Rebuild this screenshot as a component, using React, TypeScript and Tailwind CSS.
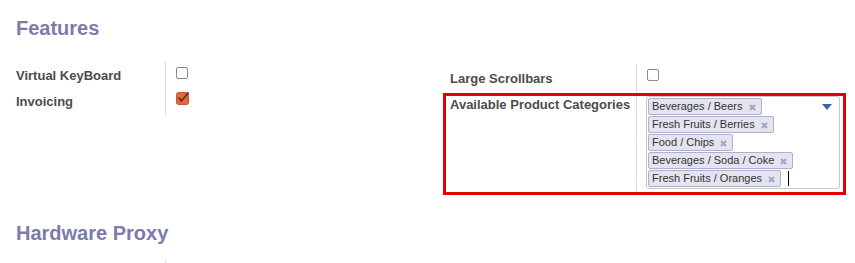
import React from 'react';

const CATEGORIES = [
  'Beverages / Beers',
  'Fresh Fruits / Berries',
  'Food / Chips',
  'Beverages / Soda / Coke',
  'Fresh Fruits / Oranges',
];

const Checkbox: React.FC<{ checked?: boolean }> = ({ checked }) =>
  checked ? (
    <svg width="14" height="14" viewBox="0 0 14 14" className="block -mt-[1px]">
      <rect x="0.5" y="1.5" width="12" height="12" rx="2" fill="#e0683f" stroke="#c9552f" />
      <path d="M2.5 6.5l3 3.5 7-8.5" fill="none" stroke="#5a2a1a" strokeWidth="1.6" />
    </svg>
  ) : (
    <div className="w-[12px] h-[12px] rounded-[2px] border border-[#8a8a8a] bg-white" />
  );

const Tag: React.FC<{ label: string }> = ({ label }) => (
  <div className="self-start flex items-center h-[17px] pl-[3px] pr-[5px] bg-[#e3e4ef] border border-[#aeb0cc] rounded-[2px] text-[11px] leading-none text-[#333]">
    <span>{label}</span>
    <svg width="7" height="7" viewBox="0 0 7 7" className="ml-[6px] mt-[1px]">
      <path d="M1 1l5 5M6 1L1 6" stroke="#a3a6c0" strokeWidth="2" />
    </svg>
  </div>
);

export default function App() {
  return (
    <div className="w-[855px] h-[263px] overflow-hidden bg-white pl-[16px] font-['Liberation_Sans',Arial,sans-serif] text-[#4c4c4c]">
      <h2 className="pt-[15px] text-[20px] leading-[26px] font-bold text-[#7c7bad]">Features</h2>

      <div className="flex items-start mt-[21px]">
        {/* left group */}
        <div className="w-[427px] flex">
          <div className="w-[150px] border-r border-[#dcdcdc] text-[13px] font-bold">
            <div className="h-[26px] pt-[4px]">Virtual KeyBoard</div>
            <div className="h-[27px] pt-[4px]">Invoicing</div>
          </div>
          <div className="pl-[10px]">
            <div className="h-[26px] pt-[5px]">
              <Checkbox />
            </div>
            <div className="h-[27px] pt-[4px]">
              <Checkbox checked />
            </div>
          </div>
        </div>

        {/* right group */}
        <div className="w-[403px] mt-[2px]">
          <div className="flex h-[29px]">
            <div className="w-[194px] pl-[7px] pt-[5px] text-[13px] font-bold border-r border-[#dcdcdc]">Large Scrollbars</div>
            <div className="pl-[10px] pt-[5px]">
              <Checkbox />
            </div>
          </div>
          <div className="flex h-[102px] border-[3px] border-[#e00000]">
            <div className="w-[191px] pl-[4px] text-[13px] leading-[18px] font-bold border-r border-[#dcdcdc]">Available Product Categories</div>
            <div className="flex-1 pl-[9px] pr-[3px] pt-0">
              <div className="relative h-[93px] border border-[#c8c8c8] rounded-[3px] pl-[1px] pt-[1px] flex flex-col gap-[1px]">
                {CATEGORIES.map((c, i) => (
                  <div key={c} className="flex items-center">
                    <Tag label={c} />
                    {i === CATEGORIES.length - 1 && <div className="ml-[7px] w-[1px] h-[15px] bg-black" />}
                  </div>
                ))}
                <svg width="10" height="6" viewBox="0 0 10 6" className="absolute right-[7px] top-[7px]">
                  <path d="M0 0h10L5 6z" fill="#3b67a5" />
                </svg>
              </div>
            </div>
          </div>
        </div>
      </div>

      <h2 className="mt-[25px] text-[20px] leading-[26px] font-bold text-[#7c7bad]">Hardware Proxy</h2>
      <div className="w-[150px] h-[20px] mt-[14px] border-r border-[#dcdcdc]" />
    </div>
  );
}
